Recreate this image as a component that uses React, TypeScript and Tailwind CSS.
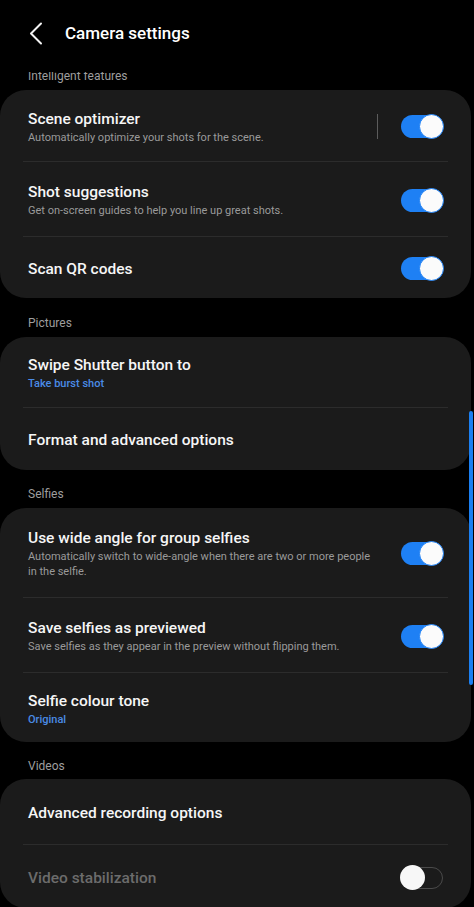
import React from "react";

type Row = {
  title: string;
  sub?: string;
  value?: string;
  toggle?: "on" | "off";
  bar?: boolean;
  disabled?: boolean;
  h: string;
};

type Section = {
  label: string;
  gap: string;
  rows: Row[];
};

const sections: Section[] = [
  {
    label: "Intelligent features",
    gap: "h-[38px] pt-[10px] -mt-[20px]",
    rows: [
      { title: "Scene optimizer", sub: "Automatically optimize your shots for the scene.", toggle: "on", bar: true, h: "h-[71px]" },
      { title: "Shot suggestions", sub: "Get on-screen guides to help you line up great shots.", toggle: "on", h: "h-[75px]" },
      { title: "Scan QR codes", toggle: "on", h: "h-[62px]" },
    ],
  },
  {
    label: "Pictures",
    gap: "h-[39px] pt-[10px]",
    rows: [
      { title: "Swipe Shutter button to", value: "Take burst shot", h: "h-[70px]" },
      { title: "Format and advanced options", h: "h-[63px]" },
    ],
  },
  {
    label: "Selfies",
    gap: "h-[38px] pt-[10px]",
    rows: [
      {
        title: "Use wide angle for group selfies",
        sub: "Automatically switch to wide-angle when there are two or more people in the selfie.",
        toggle: "on",
        h: "h-[89px]",
      },
      { title: "Save selfies as previewed", sub: "Save selfies as they appear in the preview without flipping them.", toggle: "on", h: "h-[75px]" },
      { title: "Selfie colour tone", value: "Original", h: "h-[70px]" },
    ],
  },
  {
    label: "Videos",
    gap: "h-[37px] pt-[10px]",
    rows: [
      { title: "Advanced recording options", h: "h-[65px]" },
      { title: "Video stabilization", toggle: "off", disabled: true, h: "h-[64px]" },
    ],
  },
];

const Toggle: React.FC<{ on: boolean }> = ({ on }) =>
  on ? (
    <div className="relative w-[42px] h-[23px] rounded-full bg-[#1e80f4]">
      <div className="absolute right-[-1px] top-[-1px] w-[25px] h-[25px] rounded-full bg-[#fbfbfb] border border-[#1e80f4]" />
    </div>
  ) : (
    <div className="relative w-[42px] h-[22px] rounded-full border-[1.5px] border-[#4a4a4a]">
      <div className="absolute left-[-2px] top-[-3px] w-[25px] h-[25px] rounded-full bg-[#f7f7f7]" />
    </div>
  );

const SettingRow: React.FC<{ row: Row; first: boolean }> = ({ row, first }) => (
  <div className={`${row.h} flex flex-col`}>
    {!first && <div className="mx-[23px] h-px bg-[#2c2c2c] shrink-0" />}
    <div className="flex-1 flex items-center pl-[28px] pr-[28px] pt-[2px]">
      <div className="flex-1 min-w-0 pr-[22px]">
        <div
          className={`text-[15.5px] leading-[20px] font-medium ${row.disabled ? "text-[#6c6c6c]" : "text-[#f6f6f6]"}`}
        >
          {row.title}
        </div>
        {row.sub && <div className="mt-[1px] text-[11px] leading-[15px] text-[#9a9a9a]">{row.sub}</div>}
        {row.value && <div className="mt-[1px] text-[11px] leading-[15px] font-medium text-[#4a8be6]">{row.value}</div>}
      </div>
      {row.bar && <div className="w-px h-[25px] bg-[#5c5c5c] mr-[23px]" />}
      {row.toggle && <Toggle on={row.toggle === "on"} />}
    </div>
  </div>
);

const App: React.FC = () => {
  return (
    <div className="relative w-full h-[907px] bg-black overflow-hidden font-['Roboto','Noto_Sans',sans-serif]">
      <div className="h-[72px] flex items-start pt-[22px] relative z-10 bg-black">
        <svg className="ml-[29px]" width="14" height="23" viewBox="0 0 14 23" fill="none">
          <path d="M12 1.5 L2 11.5 L12 21.5" stroke="#f2f2f2" strokeWidth="2" strokeLinecap="round" strokeLinejoin="round" />
        </svg>
        <div className="ml-[22px] text-[17px] leading-[23px] font-medium text-white">Camera settings</div>
      </div>

      <div className="overflow-hidden">
        {sections.map((section) => (
          <div key={section.label}>
            <div className={`${section.gap} flex items-center pl-[28px] text-[12px] text-[#9e9e9e]`}>
              {section.label}
            </div>
            <div className="w-[471px] bg-[#1b1b1b] rounded-[26px]">
              {section.rows.map((row, ri) => (
                <SettingRow key={row.title} row={row} first={ri === 0} />
              ))}
            </div>
          </div>
        ))}
      </div>

      <div className="absolute right-[1px] top-[411px] w-[4px] h-[274px] rounded-full bg-[#1b7ff1]" />
    </div>
  );
};

export default App;
